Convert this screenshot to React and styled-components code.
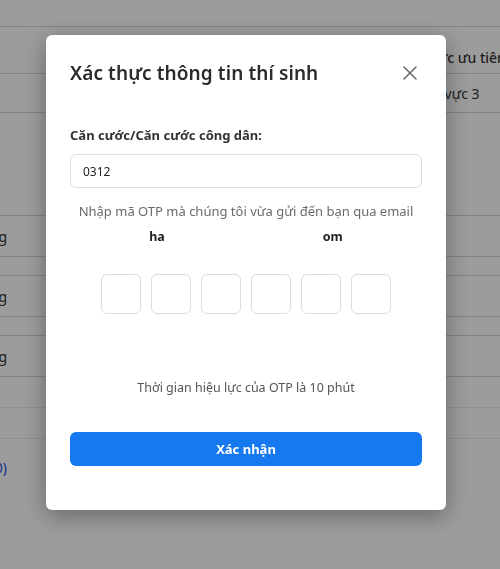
import { createGlobalStyle, styled } from "styled-components";

const GlobalStyle = createGlobalStyle`
    html, body {
        margin: 0;
        padding: 0;
        background: #ffffff;
        font-family: "Noto Sans", "Open Sans", sans-serif;
    }
    * {
        box-sizing: border-box;
    }
`;

const Page = styled.div`
    width: 500px;
    height: 569px;
    overflow: hidden;
    padding-top: 26px;
`;

const Table = styled.div`
    margin-left: -120px;
    width: 760px;
    display: flex;
    flex-direction: column;
    color: #333;
    font-size: 14px;
`;

const Row = styled.div`
    display: grid;
    grid-template-columns: 127px 1fr 240px;
    align-items: ${(p) => (p.$head ? "end" : "center")};
    padding-bottom: ${(p) => (p.$head ? 6 : 0)}px;
    height: ${(p) => p.$h}px;
    border-top: 1px solid ${(p) => (p.$faint ? "#ececec" : "#d6d6d6")};
    font-weight: ${(p) => (p.$head ? 500 : 400)};
    white-space: nowrap;
    & span:first-child {
        text-align: right;
    }
    & span:last-child {
        padding-left: ${(p) => (p.$head ? 0 : 15)}px;
    }
`;

const Link = styled.span`
    color: #1d4ed8;
`;

const Overlay = styled.div`
    position: fixed;
    inset: 0;
    background: rgba(0, 0, 0, 0.39);
    padding: 35px 0 0 46px;
`;

const Modal = styled.div`
    width: 400px;
    height: 475px;
    background: #fff;
    border-radius: 6px;
    box-shadow: 0 6px 24px rgba(0, 0, 0, 0.35);
    padding: 24px 24px 0 24px;
    display: flex;
    flex-direction: column;
`;

const Header = styled.div`
    display: flex;
    align-items: center;
    justify-content: space-between;
    height: 28px;
`;

const Title = styled.h2`
    margin: 0;
    font-size: 19px;
    font-weight: 600;
    color: #2b2b2b;
    letter-spacing: 0.1px;
`;

const Close = styled.button`
    border: none;
    background: none;
    padding: 0;
    margin-right: 2px;
    width: 20px;
    height: 20px;
    display: flex;
    align-items: center;
    justify-content: center;
    color: #6b6b6b;
    cursor: pointer;
`;

const Label = styled.label`
    margin-top: 39px;
    font-size: 13px;
    font-weight: 700;
    color: #333;
`;

const Input = styled.input`
    margin-top: 10px;
    height: 34px;
    width: 352px;
    border: 1px solid #dedede;
    border-radius: 6px;
    padding: 0 12px;
    font-family: inherit;
    font-size: 12px;
    color: #222;
    outline: none;
`;

const Hint = styled.p`
    margin: 14px 0 0;
    text-align: center;
    font-size: 13px;
    color: #6b6b6b;
`;

const Email = styled.div`
    margin-top: 8px;
    display: flex;
    justify-content: center;
    gap: 158px;
    font-size: 12.5px;
    font-weight: 700;
    color: #222;
`;

const OtpRow = styled.div`
    margin-top: 29px;
    display: flex;
    justify-content: center;
    gap: 10px;
`;

const OtpBox = styled.input`
    width: 40px;
    height: 40px;
    border: 1px solid #dcdcdc;
    border-radius: 6px;
    text-align: center;
    font-size: 16px;
    outline: none;
`;

const Expire = styled.p`
    margin: 65px 0 0;
    text-align: center;
    font-size: 12.5px;
    color: #555;
`;

const Submit = styled.button`
    margin-top: 36px;
    height: 34px;
    width: 352px;
    border: none;
    border-radius: 6px;
    background: #1679ef;
    color: #fff;
    font-family: inherit;
    font-size: 13px;
    font-weight: 700;
    cursor: pointer;
`;

const rows = [
    { h: 47, a: "", c: "Khu vực ưu tiên", head: true },
    { h: 39, a: "", c: "Khu vực 3" },
    { h: 103, a: "", c: "" },
    { h: 41, a: "Không", c: "" },
    { h: 19, a: "", c: "" },
    { h: 41, a: "Không", c: "" },
    { h: 19, a: "", c: "" },
    { h: 41, a: "Không", c: "" },
    { h: 31, a: "", c: "" },
    { h: 31, a: "", c: "", faint: true },
    { h: 57, a: "", c: "", faint: true, link: "(10)" },
];

const App = () => {
    return (
        <>
            <GlobalStyle />
            <Page>
                <Table>
                    {rows.map((r, i) => (
                        <Row key={i} $h={r.h} $head={r.head} $faint={r.faint}>
                            <span>{r.link ? <Link>{r.link}</Link> : r.a}</span>
                            <span></span>
                            <span>{r.c}</span>
                        </Row>
                    ))}
                </Table>
            </Page>
            <Overlay>
                <Modal>
                    <Header>
                        <Title>Xác thực thông tin thí sinh</Title>
                        <Close aria-label="Đóng">
                            <svg width="16" height="16" viewBox="0 0 16 16">
                                <path d="M2 2 L14 14 M14 2 L2 14" stroke="currentColor" strokeWidth="1.6" strokeLinecap="round" />
                            </svg>
                        </Close>
                    </Header>
                    <Label>Căn cước/Căn cước công dân:</Label>
                    <Input defaultValue="0312" />
                    <Hint>Nhập mã OTP mà chúng tôi vừa gửi đến bạn qua email</Hint>
                    <Email>
                        <span>ha</span>
                        <span>om</span>
                    </Email>
                    <OtpRow>
                        {[0, 1, 2, 3, 4, 5].map((i) => (
                            <OtpBox key={i} maxLength={1} />
                        ))}
                    </OtpRow>
                    <Expire>Thời gian hiệu lực của OTP là 10 phút</Expire>
                    <Submit>Xác nhận</Submit>
                </Modal>
            </Overlay>
        </>
    );
};

export default App;
